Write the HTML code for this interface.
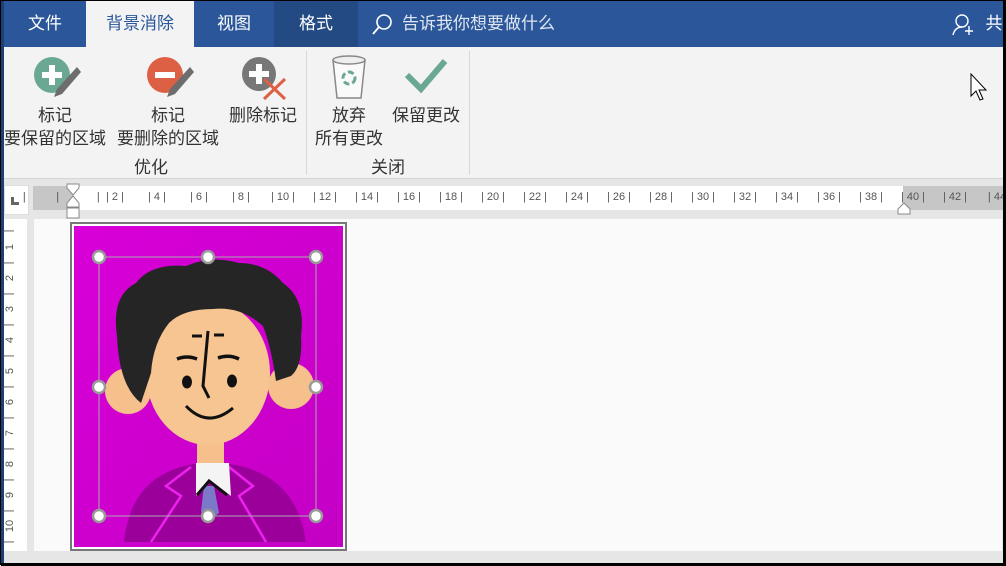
<!DOCTYPE html>
<html><head><meta charset="utf-8"><style>
*{margin:0;padding:0;box-sizing:border-box}
body{width:1006px;height:565px;overflow:hidden;position:relative;background:#e6e6e6;font-family:"Liberation Sans","Noto Sans CJK SC",sans-serif;border:1px solid #000}
.a{position:absolute}
.tab{position:absolute;top:0;height:46px;line-height:46px;color:#fff;font-size:17px;text-align:center}
.lbl{position:absolute;font-size:17px;color:#333;text-align:center;line-height:23px;white-space:nowrap}
.rn{position:absolute;top:190px;font-size:11px;color:#555;white-space:pre;width:40px;text-align:center}
.vn{position:absolute;left:6px;font-size:11px;color:#555;transform:rotate(-90deg)}
</style></head><body>
<div class="a" style="left:0;top:0;width:1006px;height:46px;background:#2b579a"></div>
<div class="a" style="left:0;top:0;width:3px;height:565px;background:#1e3f73"></div>
<div class="tab" style="left:3px;width:82px">文件</div>
<div class="tab" style="left:85px;width:108px;background:#f3f3f3;color:#2b579a">背景消除</div>
<div class="tab" style="left:193px;width:80px">视图</div>
<div class="tab" style="left:273px;width:84px;background:#234a82">格式</div>
<svg class="a" style="left:370px;top:12px" width="22" height="22"><circle cx="13" cy="9" r="7" fill="none" stroke="#fff" stroke-width="1.6"/><line x1="8" y1="14" x2="2" y2="21" stroke="#fff" stroke-width="1.8"/></svg>
<div class="tab" style="left:401px;color:#dfe6f0">告诉我你想要做什么</div>
<svg class="a" style="left:950px;top:12px" width="26" height="24"><circle cx="11" cy="8" r="6" fill="none" stroke="#fff" stroke-width="1.4"/><path d="M2 22 Q4 14 11 14" fill="none" stroke="#fff" stroke-width="1.4"/><path d="M18 13v9M14 18h8" stroke="#fff" stroke-width="1.4"/></svg>
<div class="tab" style="left:982px">共享</div>
<div class="a" style="left:3px;top:46px;width:1003px;height:132px;background:#f3f3f3;border-bottom:1px solid #d5d5d5"></div>
<div class="a" style="left:305px;top:50px;width:1px;height:124px;background:#d8d8d8"></div>
<div class="a" style="left:468px;top:50px;width:1px;height:124px;background:#d8d8d8"></div>
<svg class="a" style="left:0;top:46px" width="470" height="60">
<circle cx="51" cy="28" r="18" fill="#6aa893"/><path d="M51 18v20M41 28h20" stroke="#fff" stroke-width="6"/>
<path d="M76 20 L56 42 L53 50 L61 47 L80 25Z" fill="#6d6d6d"/>
<circle cx="164" cy="28" r="18" fill="#dd6045"/><path d="M154 28h20" stroke="#fff" stroke-width="6"/>
<path d="M189 20 L169 42 L166 50 L174 47 L193 25Z" fill="#6d6d6d"/>
<circle cx="258" cy="27" r="17" fill="#777"/><path d="M258 17v20M248 27h20" stroke="#fff" stroke-width="6"/>
<path d="M263 32 L284 52M284 32 L263 52" stroke="#dd6045" stroke-width="3"/>
<path d="M332 13 h32 l-4 38 h-24z" fill="#fafafa" stroke="#888" stroke-width="1.5"/><ellipse cx="348" cy="13" rx="16" ry="4" fill="#eee" stroke="#888" stroke-width="1.5"/>
<circle cx="348" cy="31" r="6" fill="none" stroke="#6aa893" stroke-width="3" stroke-dasharray="6 3"/>
<path d="M406 28 L420 42 L444 14" fill="none" stroke="#6aa893" stroke-width="6"/>
</svg>
<div class="lbl" style="left:0;top:103px;width:108px">标记<br>要保留的区域</div>
<div class="lbl" style="left:112px;top:103px;width:110px">标记<br>要删除的区域</div>
<div class="lbl" style="left:224px;top:103px;width:76px">删除标记</div>
<div class="lbl" style="left:310px;top:103px;width:76px">放弃<br>所有更改</div>
<div class="lbl" style="left:388px;top:103px;width:74px">保留更改</div>
<div class="lbl" style="left:120px;top:155px;width:60px">优化</div>
<div class="lbl" style="left:357px;top:155px;width:60px">关闭</div>
<svg class="a" style="left:968px;top:72px" width="20" height="30"><path d="M2 1 L2 23 L7 18 L11 27 L14 26 L10 17 L17 17Z" fill="#fff" stroke="#000" stroke-width="1"/></svg>
<!-- ruler -->
<div class="a" style="left:3px;top:184px;width:25px;height:30px;background:#fff;border:1px solid #ddd"></div>
<div class="a" style="left:10px;top:196px;width:8px;height:8px;border-left:3px solid #666;border-bottom:3px solid #666"></div>
<div class="a" style="left:32px;top:185px;width:974px;height:24px;background:#fff"></div>
<div class="a" style="left:32px;top:185px;width:40px;height:24px;background:#c6c6c6"></div>
<div class="a" style="left:902px;top:185px;width:104px;height:24px;background:#c6c6c6"></div>
<svg class="a" style="left:64px;top:182px" width="16" height="36"><path d="M2 1h12v4l-6 7-6-7z M8 13l6 7v4H2v-4z M2 25h12v10H2z" fill="#fff" stroke="#888"/></svg>
<svg class="a" style="left:895px;top:200px" width="16" height="14"><path d="M8 2l6 6v5H2V8z" fill="#fff" stroke="#888"/></svg>
<div class="rn" style="left:20px">|          |</div>
<div class="rn" style="left:62px">          |</div>
<div class="rn" style="left:94px">| 2 |</div>
<div class="rn" style="left:136px">| 4 |</div>
<div class="rn" style="left:178px">| 6 |</div>
<div class="rn" style="left:220px">| 8 |</div>
<div class="rn" style="left:262px">| 10 |</div>
<div class="rn" style="left:304px">| 12 |</div>
<div class="rn" style="left:346px">| 14 |</div>
<div class="rn" style="left:388px">| 16 |</div>
<div class="rn" style="left:430px">| 18 |</div>
<div class="rn" style="left:472px">| 20 |</div>
<div class="rn" style="left:514px">| 22 |</div>
<div class="rn" style="left:556px">| 24 |</div>
<div class="rn" style="left:598px">| 26 |</div>
<div class="rn" style="left:640px">| 28 |</div>
<div class="rn" style="left:682px">| 30 |</div>
<div class="rn" style="left:724px">| 32 |</div>
<div class="rn" style="left:766px">| 34 |</div>
<div class="rn" style="left:808px">| 36 |</div>
<div class="rn" style="left:850px">| 38 |</div>
<div class="rn" style="left:892px">| 40 |</div>
<div class="rn" style="left:934px">| 42 |</div>
<div class="rn" style="left:976px">| 44</div>
<!-- vertical ruler -->
<div class="a" style="left:3px;top:218px;width:23px;height:332px;background:#fff"></div>
<div class="vn" style="top:224px">|</div>
<div class="vn" style="top:240px">1</div><div class="vn" style="top:256px">|</div>
<div class="vn" style="top:271px">2</div><div class="vn" style="top:287px">|</div>
<div class="vn" style="top:302px">3</div><div class="vn" style="top:318px">|</div>
<div class="vn" style="top:333px">4</div><div class="vn" style="top:349px">|</div>
<div class="vn" style="top:364px">5</div><div class="vn" style="top:380px">|</div>
<div class="vn" style="top:395px">6</div><div class="vn" style="top:411px">|</div>
<div class="vn" style="top:426px">7</div><div class="vn" style="top:442px">|</div>
<div class="vn" style="top:457px">8</div><div class="vn" style="top:473px">|</div>
<div class="vn" style="top:488px">9</div><div class="vn" style="top:504px">|</div>
<div class="vn" style="top:519px;left:3px">10</div><div class="vn" style="top:535px">|</div>
<!-- page -->
<div class="a" style="left:33px;top:218px;width:968px;height:332px;background:#fafafa"></div>
<div class="a" style="left:1002px;top:0;width:4px;height:565px;background:#000"></div>
<svg class="a" style="left:69px;top:221px" width="277" height="330" viewBox="69 221 277 330">
<defs><linearGradient id="g" x1="0" y1="0" x2="1" y2="1"><stop offset="0" stop-color="#d800d8"/><stop offset="1" stop-color="#c400c4"/></linearGradient></defs>
<rect x="70" y="222" width="275" height="327" fill="#fff" stroke="#777" stroke-width="2"/>
<rect x="73" y="225" width="269" height="321" fill="url(#g)"/>
<path d="M123 541 Q130 470 200 462 L222 462 Q295 470 305 541Z" fill="#9b009b"/>
<path d="M190 466 L165 485 L180 495 L150 541 M228 466 L252 485 L238 495 L265 541" fill="none" stroke="#ee22ee" stroke-width="2.5"/>
<circle cx="127" cy="390" r="23" fill="#f5c08c"/><circle cx="290" cy="385" r="23" fill="#f5c08c"/>
<rect x="196" y="425" width="27" height="45" fill="#f5c08c"/>
<ellipse cx="207" cy="372" rx="62" ry="72" fill="#f6c592"/>
<path d="M195 462 L228 462 L230 495 L208 478 L195 495Z" fill="#f4f4f4"/>
<path d="M203 485 L213 485 L218 512 L207 520 L200 510Z" fill="#7a7ac8"/>
<path d="M196 494 L208 480 L226 494" fill="none" stroke="#111" stroke-width="3"/>
<path d="M116 335 Q110 295 135 282 Q150 262 185 265 Q210 254 238 262 Q265 262 282 282 Q305 298 300 335 Q302 365 290 375 L275 380 Q270 345 262 325 Q240 305 212 308 Q182 308 168 322 Q152 342 150 372 L140 402 Q118 385 116 335Z" fill="#252525"/>
<path d="M176 358 Q186 354 196 358 M217 357 Q228 353 238 358" stroke="#111" stroke-width="3.5" fill="none"/>
<ellipse cx="186" cy="381" rx="5" ry="6.5" fill="#111"/><ellipse cx="231" cy="380" rx="5" ry="6.5" fill="#111"/>
<path d="M207 330 L202 385 L208 397" stroke="#111" stroke-width="3" fill="none"/>
<path d="M191 335h10M213 334h10" stroke="#111" stroke-width="3"/>
<path d="M185 405 Q207 428 232 407" stroke="#111" stroke-width="3" fill="none"/>
<rect x="98" y="256" width="217" height="259" fill="none" stroke="#aaa" stroke-width="1"/>
<g fill="#fff" stroke="#999" stroke-width="2.5">
<circle cx="98" cy="256" r="6"/><circle cx="207" cy="256" r="6"/><circle cx="315" cy="256" r="6"/>
<circle cx="98" cy="386" r="6"/><circle cx="315" cy="386" r="6"/>
<circle cx="98" cy="515" r="6"/><circle cx="207" cy="515" r="6"/><circle cx="315" cy="515" r="6"/></g>
</svg>
<div class="a" style="left:0;top:562px;width:1006px;height:3px;background:#000"></div>
</body></html>
